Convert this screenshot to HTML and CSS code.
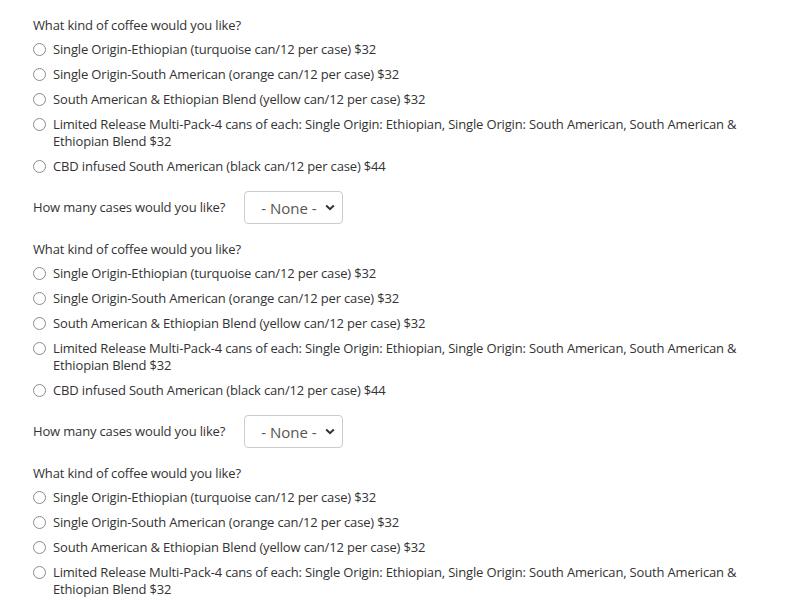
FILE: index.html
```html
<!DOCTYPE html>
<html lang="en">
<head>
<meta charset="utf-8">
<title>Coffee order</title>
<link rel="stylesheet" href="styles.css">
</head>
<body>
<form class="order">
  <fieldset class="item">
    <p class="question">What kind of coffee would you like?</p>
    <label class="option"><input type="radio" name="c1"><span>Single Origin-Ethiopian (turquoise can/12 per case) $32</span></label>
    <label class="option"><input type="radio" name="c1"><span>Single Origin-South American (orange can/12 per case) $32</span></label>
    <label class="option"><input type="radio" name="c1"><span>South American &amp; Ethiopian Blend (yellow can/12 per case) $32</span></label>
    <label class="option"><input type="radio" name="c1"><span>Limited Release Multi-Pack-4 cans of each: Single Origin: Ethiopian, Single Origin: South American, South American &amp; Ethiopian Blend $32</span></label>
    <label class="option"><input type="radio" name="c1"><span>CBD infused South American (black can/12 per case) $44</span></label>
    <div class="qty">
      <span class="qty-label">How many cases would you like?</span>
      <span class="select-wrap">
        <select class="select"><option>- None -</option><option>1</option><option>2</option></select>
        <svg class="chev" width="10" height="7" viewBox="0 0 10 7"><path d="M1.2 1.5 L5 5.2 L8.8 1.5" fill="none" stroke="#333" stroke-width="2"/></svg>
      </span>
    </div>
  </fieldset>
  <fieldset class="item">
    <p class="question">What kind of coffee would you like?</p>
    <label class="option"><input type="radio" name="c2"><span>Single Origin-Ethiopian (turquoise can/12 per case) $32</span></label>
    <label class="option"><input type="radio" name="c2"><span>Single Origin-South American (orange can/12 per case) $32</span></label>
    <label class="option"><input type="radio" name="c2"><span>South American &amp; Ethiopian Blend (yellow can/12 per case) $32</span></label>
    <label class="option"><input type="radio" name="c2"><span>Limited Release Multi-Pack-4 cans of each: Single Origin: Ethiopian, Single Origin: South American, South American &amp; Ethiopian Blend $32</span></label>
    <label class="option"><input type="radio" name="c2"><span>CBD infused South American (black can/12 per case) $44</span></label>
    <div class="qty">
      <span class="qty-label">How many cases would you like?</span>
      <span class="select-wrap">
        <select class="select"><option>- None -</option><option>1</option><option>2</option></select>
        <svg class="chev" width="10" height="7" viewBox="0 0 10 7"><path d="M1.2 1.5 L5 5.2 L8.8 1.5" fill="none" stroke="#333" stroke-width="2"/></svg>
      </span>
    </div>
  </fieldset>
  <fieldset class="item">
    <p class="question">What kind of coffee would you like?</p>
    <label class="option"><input type="radio" name="c3"><span>Single Origin-Ethiopian (turquoise can/12 per case) $32</span></label>
    <label class="option"><input type="radio" name="c3"><span>Single Origin-South American (orange can/12 per case) $32</span></label>
    <label class="option"><input type="radio" name="c3"><span>South American &amp; Ethiopian Blend (yellow can/12 per case) $32</span></label>
    <label class="option"><input type="radio" name="c3"><span>Limited Release Multi-Pack-4 cans of each: Single Origin: Ethiopian, Single Origin: South American, South American &amp; Ethiopian Blend $32</span></label>
    <label class="option"><input type="radio" name="c3"><span>CBD infused South American (black can/12 per case) $44</span></label>
    <div class="qty">
      <span class="qty-label">How many cases would you like?</span>
      <span class="select-wrap">
        <select class="select"><option>- None -</option><option>1</option><option>2</option></select>
        <svg class="chev" width="10" height="7" viewBox="0 0 10 7"><path d="M1.2 1.5 L5 5.2 L8.8 1.5" fill="none" stroke="#333" stroke-width="2"/></svg>
      </span>
    </div>
  </fieldset>
</form>
</body>
</html>
```
FILE: styles.css
```css
html, body {
  margin: 0;
  padding: 0;
  background: #fff;
}
body {
  font-family: "Open Sans", "Liberation Sans", sans-serif;
  font-size: 13px;
  letter-spacing: -0.16px;
  color: #333;
  line-height: 17px;
}
.order {
  padding: 17px 0 0 33px;
  width: 712px;
}
.item {
  border: 0;
  margin: 0;
  padding: 0;
  display: flex;
  flex-direction: column;
  gap: 8px;
  margin-bottom: 17px;
}
.question {
  margin: 0 0 -1px 0;
}
.option {
  display: flex;
  align-items: flex-start;
  gap: 7px;
}
.option input {
  appearance: none;
  -webkit-appearance: none;
  margin: 2px 0 0 0;
  width: 13px;
  height: 13px;
  border: 1px solid #8c8c8c;
  border-radius: 50%;
  background: #fff;
  flex: none;
}
.qty {
  display: flex;
  align-items: center;
  gap: 19px;
  margin-top: 8px;
}
.select-wrap {
  position: relative;
  display: inline-block;
}
.select {
  appearance: none;
  -webkit-appearance: none;
  width: 99px;
  height: 33px;
  border: 1px solid #ccc;
  border-radius: 4px;
  background: #fff;
  font-family: "Open Sans", "Liberation Sans", sans-serif;
  font-size: 15px;
  letter-spacing: 0;
  color: #555;
  padding: 0 0 0 16px;
  margin: 0;
}
.chev {
  position: absolute;
  right: 8px;
  top: 13px;
  pointer-events: none;
}
```
